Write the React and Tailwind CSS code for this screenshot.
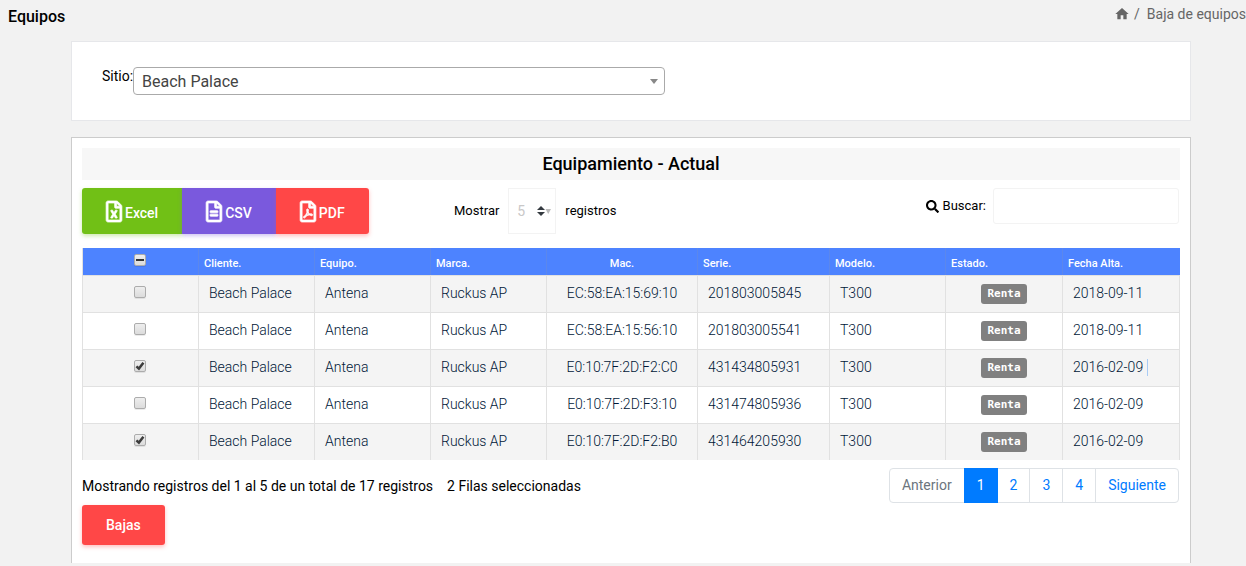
import { useState } from "react";
import { FaRegFileExcel, FaRegFileAlt, FaRegFilePdf, FaSearch } from "react-icons/fa";
import { MdHome } from "react-icons/md";

const INITIAL_ROWS = [
  { mac: "EC:58:EA:15:69:10", serie: "201803005845", fecha: "2018-09-11", checked: false },
  { mac: "EC:58:EA:15:56:10", serie: "201803005541", fecha: "2018-09-11", checked: false },
  { mac: "E0:10:7F:2D:F2:C0", serie: "431434805931", fecha: "2016-02-09", checked: true, caret: true },
  { mac: "E0:10:7F:2D:F3:10", serie: "431474805936", fecha: "2016-02-09", checked: false },
  { mac: "E0:10:7F:2D:F2:B0", serie: "431464205930", fecha: "2016-02-09", checked: true },
];

function Tick({ label, checked, mixed, onChange }) {
  return (
    <span className="grid size-3 place-items-center">
      <input
        type="checkbox"
        aria-label={label}
        checked={checked}
        onChange={onChange}
        ref={(el) => {
          if (el) el.indeterminate = Boolean(mixed);
        }}
        className="col-start-1 row-start-1 size-3 appearance-none rounded-[2px] border border-[#acacac] bg-linear-to-b from-[#eeeeee] to-[#dcdcdc] shadow-[0_1px_0_rgba(0,0,0,0.08)]"
      />
      {(mixed || checked) && (
        <svg viewBox="0 0 12 12" className="pointer-events-none col-start-1 row-start-1 size-3" aria-hidden="true">
          {mixed ? (
            <rect x="2" y="5" width="8" height="2" fill="#333" />
          ) : (
            <path d="M2.4 6.300 4.900 8.600 9.400 2.800" fill="none" stroke="#3c3c3c" strokeWidth="2.5" />
          )}
        </svg>
      )}
    </span>
  );
}

function HeadCell({ children, center }) {
  return (
    <th
      scope="col"
      className={
        "border-l border-[#5b87ec] px-[5px] pt-2 pb-1 text-[11px] leading-[15px] font-medium " +
        (center ? "text-center" : "text-left")
      }
    >
      {children}
    </th>
  );
}

function Cell({ children, center }) {
  return (
    <td
      className={
        "border-t border-l border-[#e1e1e1] py-2 align-top leading-[18px] whitespace-nowrap last:border-r " +
        (center ? "px-[9px] text-center" : "px-[10px] text-left")
      }
    >
      {children}
    </td>
  );
}

const EXPORT = "flex items-center gap-[3px] px-6 py-[10px] text-sm leading-[22px] font-medium text-white";
const EXPORT_ICON = "h-[21px] w-4 overflow-visible stroke-current stroke-[18px]";
const PAGE = "-ml-px block border border-[#dee2e6] px-3 py-2 leading-[17px] text-[#007bff]";

export default function App() {
  const [rows, setRows] = useState(INITIAL_ROWS);
  const selected = rows.filter((r) => r.checked).length;
  const toggle = (i) => setRows(rows.map((r, n) => (n === i ? { ...r, checked: !r.checked } : r)));
  const toggleAll = () => setRows(rows.map((r) => ({ ...r, checked: selected !== rows.length })));

  return (
    <div className="min-h-screen bg-[#f2f2f2] font-['Roboto',sans-serif] text-sm text-black">
      <header className="flex items-start justify-between pb-2 pl-2">
        <h1 className="pt-1 text-base leading-[25px] font-medium">Equipos</h1>
        <nav aria-label="Ruta" className="flex items-center pt-1 leading-5 text-[#666]">
          <a href="#inicio" aria-label="Inicio">
            <MdHome className="size-4" />
          </a>
          <span className="px-1">/</span>
          <span className="pl-[3px]">Baja de equipos</span>
        </nav>
      </header>

      <main className="flex flex-col gap-4 pt-1 pr-[55px] pl-[71px]">
        <section className="border border-[#e6e7ea] bg-white px-[30px] py-[25px]">
          <div className="flex w-[563px] max-w-full items-start">
            <label htmlFor="sitio" className="leading-[18px]">
              Sitio:
            </label>
            <div className="grid flex-1 items-center">
              <select
                id="sitio"
                className="col-start-1 row-start-1 h-7 w-full appearance-none rounded border border-[#aaa] bg-white pt-[2px] pr-5 pl-2 text-base leading-6 text-[#444]"
              >
                <option>Beach Palace</option>
              </select>
              <svg viewBox="0 0 8 5" className="pointer-events-none col-start-1 row-start-1 mr-[7px] h-[5px] w-2 justify-self-end" aria-hidden="true">
                <path d="M0 0h8L4 5z" fill="#888" />
              </svg>
            </div>
          </div>
        </section>

        <section className="border border-b-0 border-[#ccc] bg-white px-[10px] pt-[10px] pb-[18px]">
          <h2 className="bg-[#f7f7f7] text-center text-lg leading-8 font-medium">Equipamiento - Actual</h2>

          <div className="grid grid-cols-3 items-start pt-2 pb-[14px]">
            <div className="flex">
              <button type="button" className={EXPORT + " rounded-l-[3px] bg-[#71c016] shadow-[0_2px_4px_rgba(113,192,22,0.35)]"}>
                <FaRegFileExcel className={EXPORT_ICON} />
                <span className="pt-1">Excel</span>
              </button>
              <button type="button" className={EXPORT + " bg-[#7a59dd] shadow-[0_2px_4px_rgba(122,89,221,0.35)]"}>
                <FaRegFileAlt className={EXPORT_ICON} />
                <span className="pt-1">CSV</span>
              </button>
              <button type="button" className={EXPORT + " rounded-r-[3px] bg-[#ff4747] shadow-[0_2px_4px_rgba(255,71,71,0.35)]"}>
                <FaRegFilePdf className={EXPORT_ICON} />
                <span className="pt-1">PDF</span>
              </button>
            </div>

            <label className="flex items-center gap-[9px] pl-[6px] text-[13px]">
              <span>Mostrar</span>
              <span className="grid items-center">
                <select className="col-start-1 row-start-1 h-[46px] w-12 appearance-none border border-[#f3f3f3] bg-white pl-2 text-sm text-[#c9c8c8]">
                  <option>5</option>
                </select>
                <svg viewBox="0 0 15 10" className="pointer-events-none col-start-1 row-start-1 mr-1 h-[10px] w-[15px] justify-self-end" aria-hidden="true">
                  <path d="M0 4h8L4 0zM0 6h8L4 10z" fill="#343a40" />
                  <path d="M8.500 3h5.500L11.250 8z" fill="#bbb" />
                </svg>
              </span>
              <span>registros</span>
            </label>

            <label className="flex items-center justify-end pr-px text-[13px]">
              <FaSearch className="mr-1 size-[13px]" />
              <span className="mr-[7px]">Buscar:</span>
              <input type="search" className="h-9 w-[186px] rounded-[3px] border border-[#f3f3f3] bg-white px-2" />
            </label>
          </div>

          <table className="w-full table-fixed border-separate border-spacing-0">
            <colgroup>
              <col className="w-[116px]" />
              <col className="w-[116px]" />
              <col className="w-[116px]" />
              <col className="w-[116px]" />
              <col className="w-[151px]" />
              <col className="w-[132px]" />
              <col className="w-[116px]" />
              <col className="w-[117px]" />
              <col className="w-[118px]" />
            </colgroup>
            <thead className="bg-[#4d83ff] text-white">
              <tr>
                <th scope="col" className="border-l border-[#e1e1e1] pr-[2px] align-top">
                  <div className="flex justify-center pt-[6px]">
                    <Tick label="Seleccionar todo" checked={selected === rows.length} mixed={selected > 0 && selected < rows.length} onChange={toggleAll} />
                  </div>
                </th>
                <HeadCell>Cliente.</HeadCell>
                <HeadCell>Equipo.</HeadCell>
                <HeadCell>Marca.</HeadCell>
                <HeadCell center>Mac.</HeadCell>
                <HeadCell>Serie.</HeadCell>
                <HeadCell>Modelo.</HeadCell>
                <HeadCell>Estado.</HeadCell>
                <HeadCell>Fecha Alta.</HeadCell>
              </tr>
            </thead>
            <tbody className="font-light text-[#001737]">
              {rows.map((r, i) => (
                <tr key={r.serie} className="odd:bg-[#f4f4f4]">
                  <Cell>
                    <span className="flex justify-center pt-[2px] pr-[2px]">
                      <Tick label={"Seleccionar " + r.serie} checked={r.checked} onChange={() => toggle(i)} />
                    </span>
                  </Cell>
                  <Cell>Beach Palace</Cell>
                  <Cell>Antena</Cell>
                  <Cell>Ruckus AP</Cell>
                  <Cell center>{r.mac}</Cell>
                  <Cell>{r.serie}</Cell>
                  <Cell>T300</Cell>
                  <Cell>
                    <span className="mx-auto block w-fit rounded-[3px] bg-[#808080] px-[6px] font-['DejaVu_Sans_Mono',monospace] text-[11px] leading-5 font-bold text-white">
                      Renta
                    </span>
                  </Cell>
                  <Cell>
                    <span className="flex items-center gap-1">
                      {r.fecha}
                      {r.caret && <span className="h-[17px] w-px bg-[#a8cbf5]" />}
                    </span>
                  </Cell>
                </tr>
              ))}
            </tbody>
          </table>

          <div className="flex items-start justify-between pt-2 pr-px">
            <p className="flex gap-[14px] pt-2 leading-5">
              <span>Mostrando registros del 1 al 5 de un total de 17 registros</span>
              <span>{selected} Filas seleccionadas</span>
            </p>
            <nav aria-label="Paginación">
              <ul className="flex">
                <li>
                  <a href="#anterior" aria-disabled="true" className="block rounded-l border border-[#dee2e6] px-3 py-2 leading-[17px] text-[#6c757d]">
                    Anterior
                  </a>
                </li>
                <li>
                  <a href="#1" aria-current="page" className="relative -ml-px block border border-[#007bff] bg-[#007bff] px-3 py-2 leading-[17px] text-white">
                    1
                  </a>
                </li>
                <li><a href="#2" className={PAGE}>2</a></li>
                <li><a href="#3" className={PAGE}>3</a></li>
                <li><a href="#4" className={PAGE}>4</a></li>
                <li><a href="#siguiente" className={PAGE + " rounded-r"}>Siguiente</a></li>
              </ul>
            </nav>
          </div>

          <button type="button" className="mt-[2px] rounded-[3px] bg-[#ff4747] px-6 py-[10px] leading-5 font-medium text-white shadow-[0_2px_4px_rgba(255,71,71,0.35)]">
            Bajas
          </button>
        </section>
      </main>
    </div>
  );
}
